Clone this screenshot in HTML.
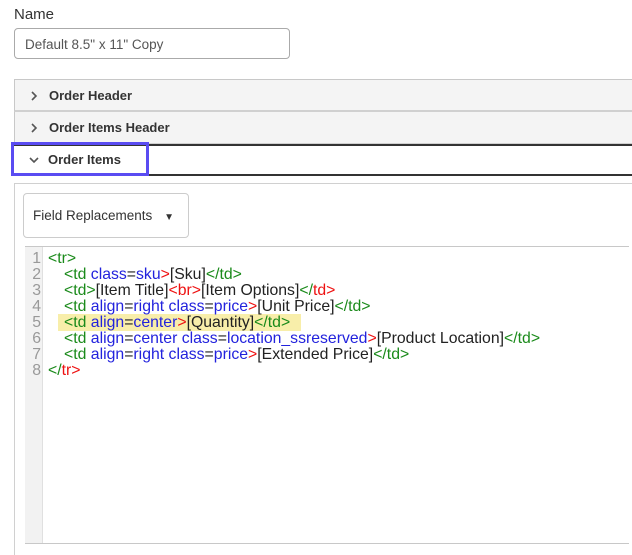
<!DOCTYPE html>
<html><head><meta charset="utf-8"><style>
*{box-sizing:border-box;margin:0;padding:0}
body{width:632px;height:555px;background:#fff;font-family:"Liberation Sans",Arial,sans-serif;position:relative;overflow:hidden;color:#222}
.abs{position:absolute}
.lbl{left:14px;top:6px;font-size:15px;color:#333}
.inp{left:14px;top:28px;width:276px;height:31px;border:1px solid #aaa;border-radius:4px;font-size:13.5px;color:#555;padding:8px 10px}
.row{left:14px;width:618px;font-size:13px;font-weight:bold;color:#333;padding-left:34px}
.chev{position:absolute;left:15px;top:0;font-weight:normal;color:#555}
.code{font-size:15.8px;line-height:16px;white-space:pre}
.i{display:inline-block;width:16px}
.g{color:#1a8a1a}.b{color:#2222dd}.r{color:#ee1111}.k{color:#222}
</style></head><body>
<div class="abs lbl">Name</div>
<div class="abs inp">Default 8.5" x 11" Copy</div>

<div class="abs row" style="top:79px;height:33px;background:#f4f4f4;border-top:1px solid #c8c8c8;border-left:1px solid #c8c8c8;border-bottom:2px solid #d0d0d0;line-height:31px">
<svg class="chev" style="top:11px" width="8" height="10" viewBox="0 0 8 10"><path d="M2 1l4 4-4 4" fill="none" stroke="#555" stroke-width="1.6"/></svg>Order Header</div>
<div class="abs row" style="top:112px;height:32px;background:#f4f4f4;border-left:1px solid #c8c8c8;border-bottom:1px solid #d0d0d0;line-height:31px">
<svg class="chev" style="top:11px" width="8" height="10" viewBox="0 0 8 10"><path d="M2 1l4 4-4 4" fill="none" stroke="#555" stroke-width="1.6"/></svg>Order Items Header</div>
<div class="abs row" style="top:144px;height:32px;background:#fff;border-top:2px solid #333;border-bottom:2px solid #333;line-height:28px">
<svg class="chev" style="top:10px" width="10" height="8" viewBox="0 0 10 8"><path d="M1 2l4 4 4-4" fill="none" stroke="#555" stroke-width="1.6"/></svg>Order Items</div>
<div class="abs" style="left:11px;top:142px;width:138px;height:34px;border:3px solid #5a4cf2"></div>

<div class="abs" style="left:14px;top:183px;width:618px;height:372px;border-top:1px solid #d0d0d0;border-left:1px solid #d0d0d0"></div>
<div class="abs" style="left:23px;top:193px;width:166px;height:45px;border:1px solid #ccc;border-radius:4px;font-size:13.5px;color:#333;padding:14px 0 0 9px">Field Replacements <span style="font-size:10px;margin-left:8px">&#9660;</span></div>

<div class="abs" style="left:25px;top:246px;width:604px;height:298px;border-top:1px solid #c8c8c8;border-bottom:1px solid #c8c8c8"></div>
<div class="abs" style="left:25px;top:247px;width:18px;height:296px;background:#f2f2f2;border-right:1px solid #e0e0e0"></div>
<div class="abs" style="left:58px;top:314px;width:243px;height:17px;background:#f8eeaa"></div>
<div class="abs code" style="left:25px;top:251px;width:16px;text-align:right;color:#999">1
2
3
4
5
6
7
8</div>
<div class="abs code" style="left:48px;top:251px"><span class="g">&lt;tr&gt;</span>
<span class="i"></span><span class="g">&lt;td</span> <span class="b">class</span><span class="k">=</span><span class="b">sku</span><span class="r">&gt;</span><span class="k">[Sku]</span><span class="g">&lt;/td&gt;</span>
<span class="i"></span><span class="g">&lt;td&gt;</span><span class="k">[Item Title]</span><span class="r">&lt;br&gt;</span><span class="k">[Item Options]</span><span class="g">&lt;/</span><span class="r">td&gt;</span>
<span class="i"></span><span class="g">&lt;td</span> <span class="b">align</span><span class="k">=</span><span class="b">right</span> <span class="b">class</span><span class="k">=</span><span class="b">price</span><span class="r">&gt;</span><span class="k">[Unit Price]</span><span class="g">&lt;/td&gt;</span>
<span class="i"></span><span class="g">&lt;td</span> <span class="b">align</span><span class="k">=</span><span class="b">center</span><span class="r">&gt;</span><span class="k">[Quantity]</span><span class="g">&lt;/td&gt;</span>
<span class="i"></span><span class="g">&lt;td</span> <span class="b">align</span><span class="k">=</span><span class="b">center</span> <span class="b">class</span><span class="k">=</span><span class="b">location_ssreserved</span><span class="r">&gt;</span><span class="k">[Product Location]</span><span class="g">&lt;/td&gt;</span>
<span class="i"></span><span class="g">&lt;td</span> <span class="b">align</span><span class="k">=</span><span class="b">right</span> <span class="b">class</span><span class="k">=</span><span class="b">price</span><span class="r">&gt;</span><span class="k">[Extended Price]</span><span class="g">&lt;/td&gt;</span>
<span class="g">&lt;/</span><span class="r">tr&gt;</span></div>
</body></html>
